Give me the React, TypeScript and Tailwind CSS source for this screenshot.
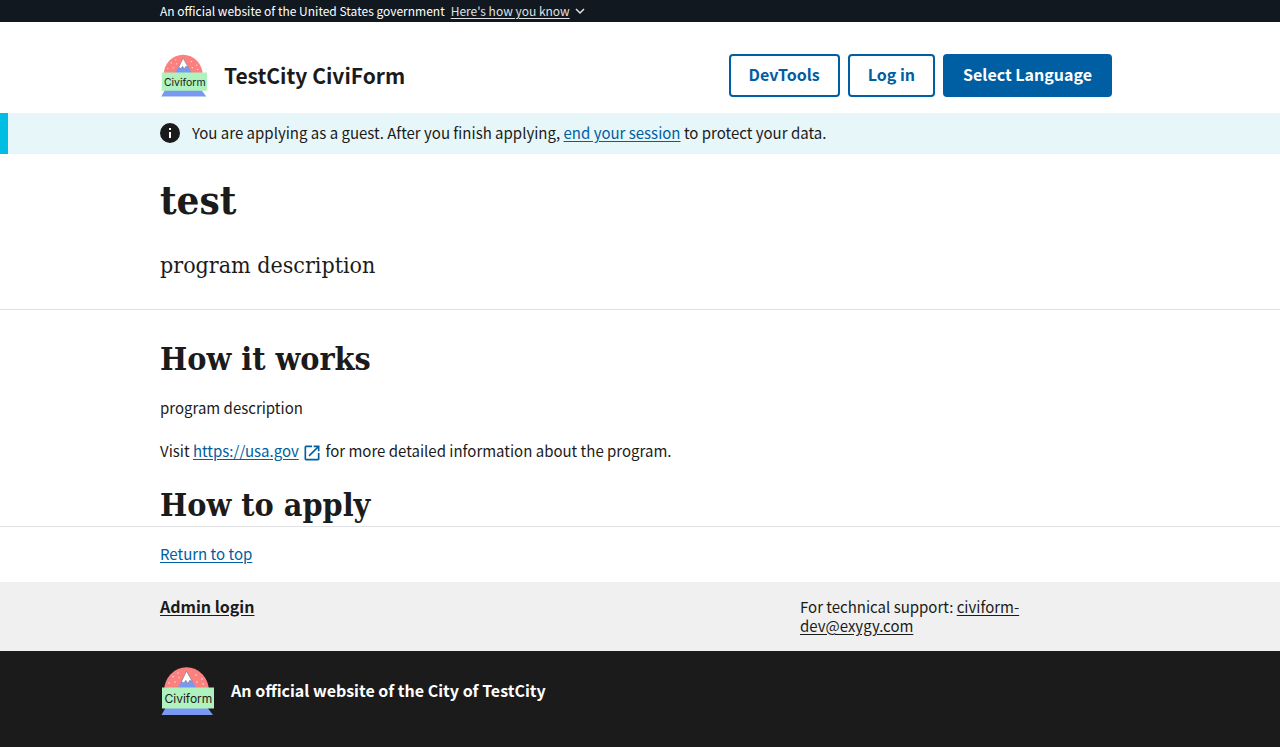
import type { ReactNode } from 'react';

const sans = "font-['Noto_Sans_CJK_SC',sans-serif]";
const serif = "font-['DejaVu_Serif_Condensed','DejaVu_Serif',serif]";

function Container({ className = '', children }: { className?: string; children: ReactNode }) {
  return <div className={`mx-auto w-full max-w-5xl px-8 ${className}`}>{children}</div>;
}

function Logo({ className }: { className: string }) {
  return (
    <svg viewBox="0 0 55 49" className={className} role="img" aria-label="Civiform logo">
      <path d="M4 24a22 23.300 0 0 1 45 0z" fill="#fb8080" />
      <path d="M17 22 26.500 4.500 37 22z" fill="#7898f2" />
      <path d="M21.500 14.500 26.500 4.300 32.300 14.500l-2.600-1.200-1.800 3.200-2-3.200-2 2.700z" fill="#fff" stroke="#555" strokeWidth=".4" />
      <g fill="#ffdcdc">
        <circle cx="13" cy="9.500" r=".8" /><circle cx="18" cy="6" r=".7" /><circle cx="9" cy="16" r=".8" />
        <circle cx="15" cy="15" r=".8" /><circle cx="19" cy="10.500" r=".7" /><circle cx="36" cy="8" r=".8" />
        <circle cx="37" cy="15" r=".8" /><circle cx="42" cy="12" r=".8" /><circle cx="43" cy="17" r=".8" />
      </g>
      <path d="M6 40h41l6 8H1.500z" fill="#7898f2" />
      <path d="M2 20.500h52v21H2z" fill="#aff2bd" />
      <text x="4.500" y="35.500" fontSize="12" fill="#1b1b1b" className="font-['Inter',sans-serif]">Civiform</text>
    </svg>
  );
}

export default function App() {
  return (
    <div id="top" className={`flex min-h-screen flex-col bg-white text-[15px] leading-5 text-[#1b1b1b] ${sans}`}>
      <div className="bg-[#11181f] text-[12px] leading-[22px] text-white">
        <Container className="flex items-center gap-1.5">
          <span>An official website of the United States government</span>
          <button className="flex items-center gap-1 text-[#dfe1e2]">
            <span className="underline underline-offset-2">Here's how you know</span>
            <svg viewBox="0 0 12 12" className="size-3" fill="none" stroke="currentColor" strokeWidth="1.500"><path d="M2 4l4 4 4-4" /></svg>
          </button>
        </Container>
      </div>

      <header>
        <Container className="flex items-start justify-between pt-8 pb-[15px]">
          <div className="flex items-start gap-4">
            <Logo className="h-11 w-12" />
            <span className="text-[21px] leading-[43px] font-bold">TestCity CiviForm</span>
          </div>
          <div className="flex gap-2 pr-2 text-base font-bold">
            <button className="h-[43px] rounded border-2 border-[#005ea2] px-[18px] pb-[3px] text-[#005ea2]">DevTools</button>
            <button className="h-[43px] rounded border-2 border-[#005ea2] px-[18px] pb-[3px] text-[#005ea2]">Log in</button>
            <button className="h-[43px] rounded bg-[#005ea2] px-5 pb-[3px] text-white">Select Language</button>
          </div>
        </Container>
      </header>

      <section aria-label="Session notice" className="border-l-8 border-[#00bde3] bg-[#e7f6f8] pr-2">
        <Container className="flex items-start gap-3 pt-2 pb-[10px]">
          <svg viewBox="0 0 20 20" className="mt-0.5 size-5 shrink-0" aria-hidden="true">
            <circle cx="10" cy="10" r="10" fill="#1b1b1b" />
            <path d="M9 5h2v2H9zM9 9h2v6H9z" fill="#fff" />
          </svg>
          <p className="leading-[23px]">
            You are applying as a guest. After you finish applying, <a href="#session" className="text-[#005ea2] underline underline-offset-2">end your session</a> to protect your data.
          </p>
        </Container>
      </section>

      <main>
        <section className="border-b border-[#dfe1e2]">
          <Container className={`pt-5 pb-7 ${serif}`}>
            <h1 className="text-[40px] leading-[51px] font-bold">test</h1>
            <p className="mt-6 text-[23px] leading-8">program description</p>
          </Container>
        </section>

        <section className="border-b border-[#dfe1e2]">
          <Container className="pt-7 pb-px">
            <h2 className={`text-[32px] leading-[42px] font-bold ${serif}`}>How it works</h2>
            <p className="mt-[18px]">program description</p>
            <p className="mt-[23px]">
              Visit <a href="https://usa.gov" className="text-[#005ea2]"><span className="underline underline-offset-2">https://usa.gov</span>{' '}
                <svg viewBox="0 0 24 24" className="inline size-5 align-[-6px]" fill="currentColor" aria-hidden="true"><path d="M19 19H5V5h7V3H5a2 2 0 0 0-2 2v14a2 2 0 0 0 2 2h14c1.100 0 2-.9 2-2v-7h-2v7zM14 3v2h3.590l-9.830 9.830 1.410 1.410L19 6.410V10h2V3h-7z" /></svg>
              </a> for more detailed information about the program.
            </p>
            <h2 className={`mt-[22px] text-[32px] leading-[40px] font-bold ${serif}`}>How to apply</h2>
          </Container>
        </section>
      </main>

      <footer className="flex grow flex-col">
        <Container className="pt-[15px] pb-[17px] leading-[23px]">
          <a href="#top" className="text-[#005ea2] underline underline-offset-2">Return to top</a>
        </Container>
        <div className="bg-[#f0f0f0]">
          <Container className="grid grid-cols-3 pt-[15px] pb-4 leading-[19px]">
            <a href="#admin" className="col-span-2 justify-self-start text-base leading-[19px] font-bold underline underline-offset-2">Admin login</a>
            <p>For technical support: <a href="mailto:civiform-dev@exygy.com" className="underline underline-offset-2">civiform-<br />dev@exygy.com</a></p>
          </Container>
        </div>
        <div className="grow bg-[#1b1b1b] text-white">
          <Container className="flex items-start gap-4 pt-4 pb-8">
            <Logo className="h-[49px] w-[55px]" />
            <p className="text-base leading-[47px] font-bold">An official website of the City of TestCity</p>
          </Container>
        </div>
      </footer>
    </div>
  );
}
